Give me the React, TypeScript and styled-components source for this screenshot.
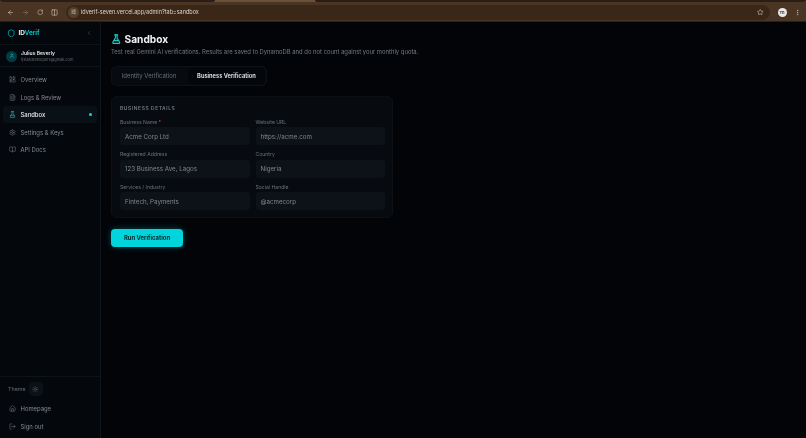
import React from "react";
import styled, { createGlobalStyle } from "styled-components";
import {
  ArrowLeft, ArrowRight, RotateCw, Columns2, SlidersHorizontal, Star, EllipsisVertical,
  Shield, ChevronLeft, LayoutDashboard, FileText, FlaskConical, Settings, BookOpen, Sun, House, LogOut, User,
} from "lucide-react";

const Global = createGlobalStyle`
  html, body { margin: 0; padding: 0; background: #020408; }
  body { font-family: Inter, "Liberation Sans", sans-serif; -webkit-font-smoothing: antialiased; }
  * { box-sizing: border-box; }
`;

const Page = styled.div`
  width: 806px; height: 438px; display: flex; flex-direction: column; overflow: hidden; background: #020408; filter: blur(0.35px);
`;
const TabStrip = styled.div`
  height: 2px; flex: none; background: #6b5138; display: flex;
`;
const StripTab = styled.span<{ $width: number }>`
  width: ${(p) => p.$width}px; flex: ${(p) => (p.$width ? "none" : 1)}; background: #2a1d13; border-radius: 0 0 3px 3px;
`;
const StripGap = styled.span`
  width: 100px; flex: none;
`;
const Chrome = styled.div`
  height: 20px; flex: none; background: #4a3423; display: flex; align-items: center; padding: 1px 5.5px 0 6.5px; color: #cfc4ba;
  border-bottom: 1px solid #2e2016;
`;
const NavIcons = styled.div`
  display: flex; align-items: center; gap: 8px; width: 59.5px; flex: none;
`;
const Omnibox = styled.div`
  flex: 1; height: 15px; border-radius: 8px; background: #3a2717; display: flex; align-items: center; padding: 0 6.5px 0 2px; gap: 2px;
  font-size: 5.5px; color: #ddd5ce; margin-right: 7.5px;
`;
const SiteChip = styled.span`
  width: 11px; height: 11px; border-radius: 50%; background: #54402f; display: flex; align-items: center; justify-content: center; flex: none;
`;
const Url = styled.span` flex: 1; white-space: nowrap; `;
const Avatar = styled.span`
  width: 9px; height: 9px; border-radius: 50%; background: #e8e8ea; flex: none; margin-right: 7px;
  font-size: 4px; font-weight: 700; color: #334; display: flex; align-items: center; justify-content: center;
`;
const Body = styled.div`
  flex: 1; display: flex; min-height: 0;
`;
const Sidebar = styled.aside`
  width: 101px; flex: none; display: flex; flex-direction: column; background: #04070b; border-right: 1px solid #10151b;
`;
const Brand = styled.div`
  height: 23px; flex: none; display: flex; align-items: center; padding: 0 8px 0 6.5px; border-bottom: 1px solid #0e1318; color: #00c9d0;
`;
const BrandName = styled.span`
  margin-left: 3.5px; flex: 1; font-size: 6.5px; font-weight: 700; color: #f0f3f5; letter-spacing: -0.1px;
  em { font-style: normal; color: #00bfc6; }
`;
const UserRow = styled.div`
  height: 22px; flex: none; display: flex; align-items: center; gap: 4px; padding: 1px 6px 0; border-bottom: 1px solid #0e1318;
`;
const UserBadge = styled.span`
  width: 11px; height: 11px; border-radius: 50%; background: #063a40; color: #18c9cf; display: flex; align-items: center; justify-content: center; flex: none;
`;
const UserText = styled.div`
  display: flex; flex-direction: column; gap: 1.5px; min-width: 0;
`;
const UserName = styled.span`
  font-size: 5px; font-weight: 600; color: #dfe3e6; line-height: 6px; white-space: nowrap;
`;
const UserMail = styled.span`
  font-size: 3.9px; color: #616a72; line-height: 5px; white-space: nowrap;
`;
const NavList = styled.nav`
  flex: 1; display: flex; flex-direction: column; gap: 0.6px; padding: 4px 3px 0;
`;
const NavItem = styled.div<{ $active?: boolean }>`
  height: 17px; display: flex; align-items: center; gap: 5px; padding: 0 5px 0 5.5px; border-radius: 3px; font-size: 5.9px;
  color: ${(p) => (p.$active ? "#e6eaed" : "#828c94")}; font-weight: ${(p) => (p.$active ? 500 : 400)};
  background: ${(p) => (p.$active ? "#0a1116" : "transparent")};
  svg { color: ${(p) => (p.$active ? "#1ec8c8" : "#69727a")}; flex: none; }
`;
const NavLabel = styled.span` flex: 1; white-space: nowrap; `;
const Dot = styled.span`
  width: 3px; height: 3px; border-radius: 50%; background: #10d8d8;
`;
const SideFooter = styled.div`
  flex: none; border-top: 1px solid #0e1318; padding: 4px 3px 3px; display: flex; flex-direction: column; gap: 0.6px;
`;
const ThemeRow = styled.div`
  height: 17px; display: flex; align-items: center; gap: 3px; padding: 0 5px; font-size: 5.4px; color: #626c74; margin-bottom: 2px;
`;
const ThemeButton = styled.span`
  width: 14px; height: 14px; border-radius: 4px; background: #0b1116; color: #59636b; display: flex; align-items: center; justify-content: center;
`;
const Main = styled.main`
  flex: 1; padding: 10px 0 0 10px; display: flex; flex-direction: column; align-items: flex-start; background: #020408;
`;
const TitleRow = styled.div`
  display: flex; align-items: center; gap: 3px; height: 14px; color: #1ec8c8;
`;
const Title = styled.h1`
  margin: 0; font-size: 10.2px; font-weight: 700; color: #f1f4f6; line-height: 14px;
`;
const Subtitle = styled.p`
  margin: 0.5px 0 0; font-size: 5.88px; line-height: 9px; color: #727b83; white-space: nowrap;
`;
const Tabs = styled.div`
  margin-top: 10px; height: 20px; width: 156px; display: flex; align-items: stretch; justify-content: space-between; border-radius: 5px; background: #070b10; border: 1px solid #0c1117; padding: 1px;
`;
const Tab = styled.div<{ $active?: boolean }>`
  display: flex; align-items: center; justify-content: center; border-radius: 4px; white-space: nowrap;
  font-size: ${(p) => (p.$active ? "5.75px" : "5.95px")};
  width: ${(p) => (p.$active ? "77px" : "72px")};
  color: ${(p) => (p.$active ? "#e7ebee" : "#667078")}; font-weight: ${(p) => (p.$active ? 600 : 400)};
  background: ${(p) => (p.$active ? "#03060a" : "transparent")};
`;
const Card = styled.section`
  margin-top: 10px; width: 282px; height: 122px; border-radius: 5px; background: #070b10; border: 1px solid #0b1015; padding: 8px 8px 0;
`;
const CardHeading = styled.div`
  font-size: 4.9px; font-weight: 600; letter-spacing: 0.6px; color: #727b83; line-height: 6px;
`;
const Grid = styled.div`
  margin-top: 8px; display: grid; grid-template-columns: 129.5px 129.5px; column-gap: 6px; row-gap: 6.2px;
`;
const Field = styled.div`
  display: flex; flex-direction: column; gap: 2.5px;
`;
const Label = styled.label`
  font-size: 5.1px; line-height: 6px; color: #667078; white-space: nowrap;
  b { color: #e0344a; font-weight: 500; }
`;
const Input = styled.div`
  height: 18px; border-radius: 3px; background: #0c1217; display: flex; align-items: center; padding: 0 5px; font-size: 6.2px; color: #7f878d; white-space: nowrap;
`;
const RunButton = styled.button`
  margin-top: 11px; width: 72px; height: 18px; border: 0; border-radius: 4px; background: #00d5dc; color: #05282c; font-family: inherit;
  font-size: 5.9px; font-weight: 700; padding: 0; box-shadow: 0 0 6px rgba(0, 213, 220, 0.35);
`;

const fields: { label: string; value: string; required?: boolean }[] = [
  { label: "Business Name", value: "Acme Corp Ltd", required: true },
  { label: "Website URL", value: "https://acme.com" },
  { label: "Registered Address", value: "123 Business Ave, Lagos" },
  { label: "Country", value: "Nigeria" },
  { label: "Services / Industry", value: "Fintech, Payments" },
  { label: "Social Handle", value: "@acmecorp" },
];

const nav = [
  { label: "Overview", Icon: LayoutDashboard },
  { label: "Logs & Review", Icon: FileText },
  { label: "Sandbox", Icon: FlaskConical, active: true },
  { label: "Settings & Keys", Icon: Settings },
  { label: "API Docs", Icon: BookOpen },
];

export default function App() {
  return (
    <Page>
      <Global />
      <TabStrip>
        <StripTab $width={215} />
        <StripGap />
        <StripTab $width={0} />
      </TabStrip>
      <Chrome>
        <NavIcons>
          <ArrowLeft size={7} />
          <ArrowRight size={7} opacity={0.45} />
          <RotateCw size={6.5} />
          <Columns2 size={7} />
        </NavIcons>
        <Omnibox>
          <SiteChip><SlidersHorizontal size={5.5} /></SiteChip>
          <Url>idverif-seven.vercel.app/admin?tab=sandbox</Url>
          <Star size={6.5} />
        </Omnibox>
        <Avatar>Th</Avatar>
        <EllipsisVertical size={7} />
      </Chrome>
      <Body>
        <Sidebar>
          <Brand>
            <Shield size={8.5} strokeWidth={2} />
            <BrandName>ID<em>Verif</em></BrandName>
            <ChevronLeft size={6} color="#59636b" />
          </Brand>
          <UserRow>
            <UserBadge><User size={5.5} /></UserBadge>
            <UserText>
              <UserName>Julius Beverly</UserName>
              <UserMail>tjstardevelopers@gmail.com</UserMail>
            </UserText>
          </UserRow>
          <NavList>
            {nav.map(({ label, Icon, active }) => (
              <NavItem key={label} $active={active}>
                <Icon size={7} />
                <NavLabel>{label}</NavLabel>
                {active && <Dot />}
              </NavItem>
            ))}
          </NavList>
          <SideFooter>
            <ThemeRow>
              Theme
              <ThemeButton><Sun size={6.5} /></ThemeButton>
            </ThemeRow>
            <NavItem><House size={7} /><NavLabel>Homepage</NavLabel></NavItem>
            <NavItem><LogOut size={7} /><NavLabel>Sign out</NavLabel></NavItem>
          </SideFooter>
        </Sidebar>
        <Main>
          <TitleRow>
            <FlaskConical size={10.5} strokeWidth={2.4} fill="rgba(30,200,200,0.25)" />
            <Title>Sandbox</Title>
          </TitleRow>
          <Subtitle>Test real Gemini AI verifications. Results are saved to DynamoDB and do not count against your monthly quota.</Subtitle>
          <Tabs>
            <Tab>Identity Verification</Tab>
            <Tab $active>Business Verification</Tab>
          </Tabs>
          <Card>
            <CardHeading>BUSINESS DETAILS</CardHeading>
            <Grid>
              {fields.map((f) => (
                <Field key={f.label}>
                  <Label>{f.label}{f.required && <b> *</b>}</Label>
                  <Input>{f.value}</Input>
                </Field>
              ))}
            </Grid>
          </Card>
          <RunButton>Run Verification</RunButton>
        </Main>
      </Body>
    </Page>
  );
}
